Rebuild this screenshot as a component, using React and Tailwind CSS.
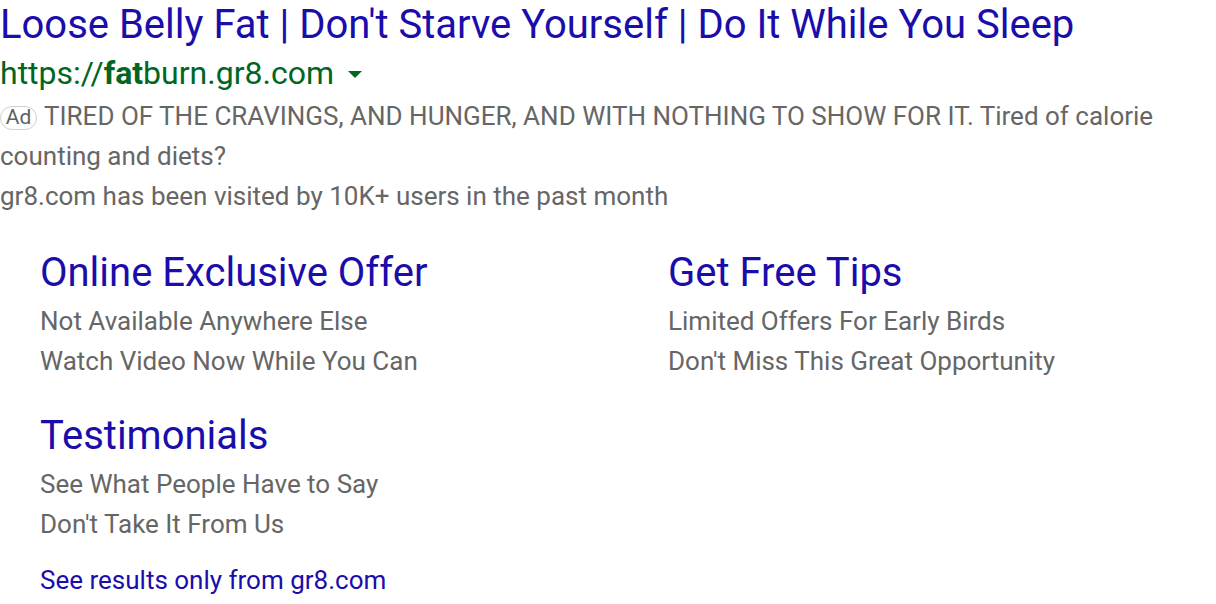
import React from 'react';

const sitelinks = [
    { title: 'Online Exclusive Offer', lines: ['Not Available Anywhere Else', 'Watch Video Now While You Can'] },
    { title: 'Get Free Tips', lines: ['Limited Offers For Early Birds', "Don't Miss This Great Opportunity"] },
    { title: 'Testimonials', lines: ['See What People Have to Say', "Don't Take It From Us"] },
];

const App = () => {
    return (
        <div className="bg-white w-[1216px] h-[604px] overflow-hidden font-['Roboto',sans-serif]">
            <div>
                <h1 className="text-[40px] leading-[50px] text-[#1a0dab] whitespace-nowrap">
                    Loose Belly Fat | Don't Starve Yourself | Do It While You Sleep
                </h1>
                <div className="flex items-center h-[46px] text-[32px] text-[#006621]">
                    <span>https://<b className="font-bold">fat</b>burn.gr8.com</span>
                    <span className="ml-[14px] mt-[2px] w-0 h-0 border-l-[7px] border-r-[7px] border-t-[7px] border-l-transparent border-r-transparent border-t-[#006621]"></span>
                </div>
                <div className="text-[26px] leading-[40px] text-[#666666] pr-[50px]">
                    <p>
                        <span className="inline-flex items-center justify-center align-[1px] h-[24px] w-[37px] mr-[7px] rounded-[12px] border border-[#cfcfcf] text-[21px] leading-none text-[#5f5f5f]">Ad</span>
                        TIRED OF THE CRAVINGS, AND HUNGER, AND WITH NOTHING TO SHOW FOR IT. Tired of calorie counting and diets?
                    </p>
                    <p>gr8.com has been visited by 10K+ users in the past month</p>
                </div>
            </div>
            <div className="grid grid-cols-[628px_1fr] pl-[40px] mt-[32px] gap-y-[30px]">
                {sitelinks.map(s => (
                    <div key={s.title}>
                        <h3 className="text-[40px] leading-[50px] pb-[3px] text-[#1a0dab]">{s.title}</h3>
                        {s.lines.map(l => (
                            <p key={l} className="text-[26px] leading-[40px] text-[#666666]">{l}</p>
                        ))}
                    </div>
                ))}
            </div>
            <p className="pl-[40px] mt-[16px] text-[26px] leading-[40px] text-[#1a0dab]">See results only from gr8.com</p>
        </div>
    );
};

export default App;
